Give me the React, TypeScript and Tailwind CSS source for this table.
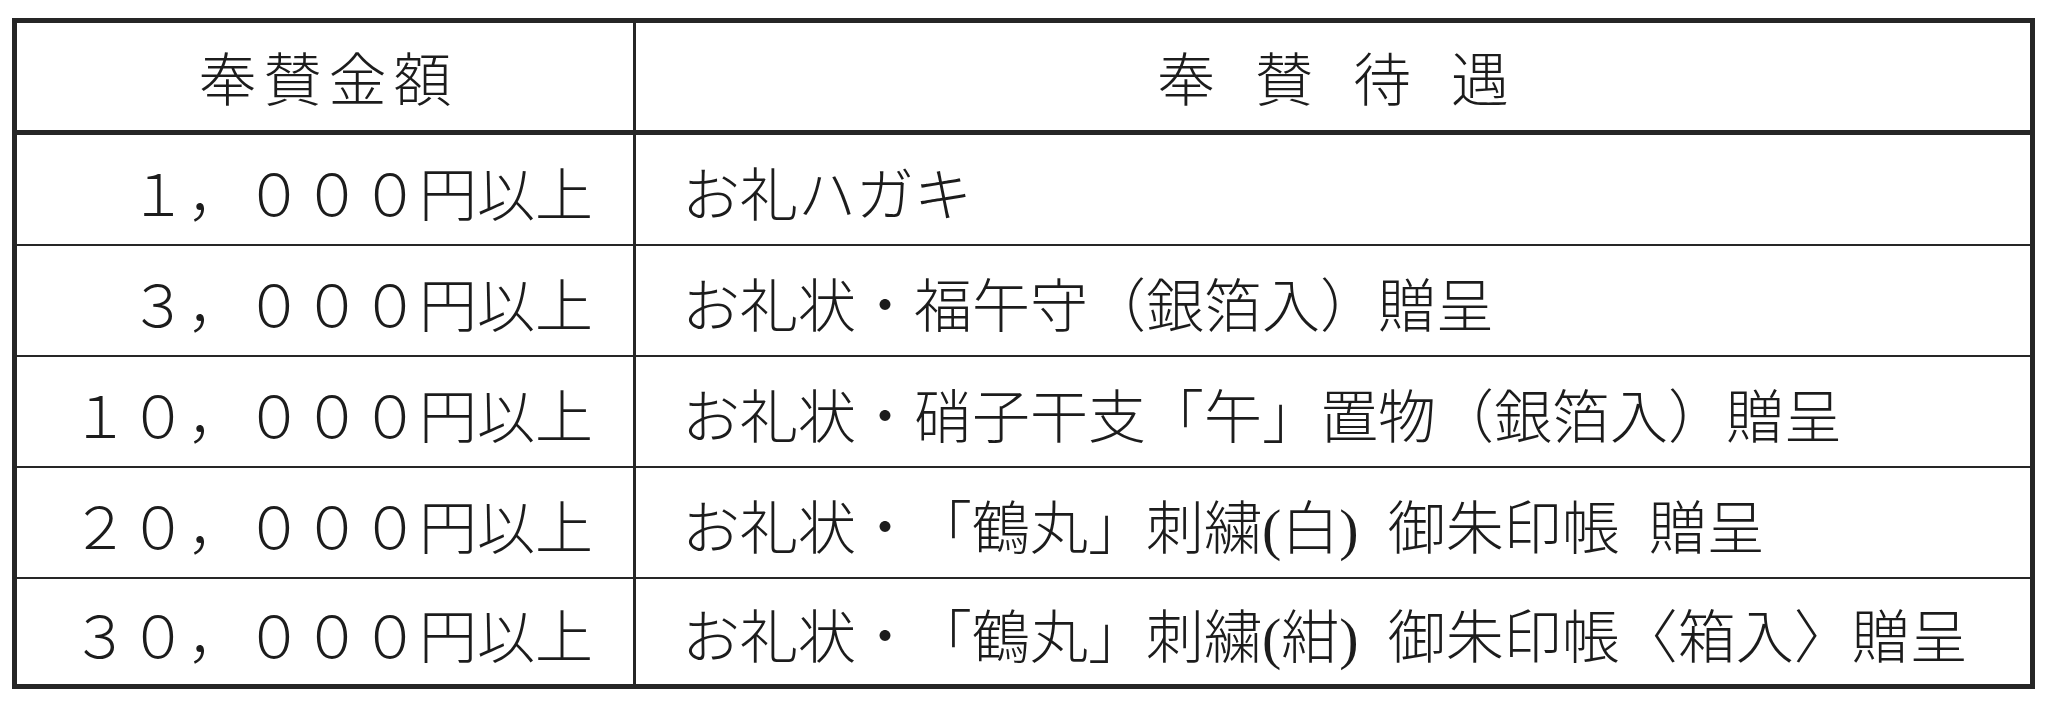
const rows = [
  { amount: '１，０００円以上', gift: 'お礼ハガキ' },
  { amount: '３，０００円以上', gift: 'お礼状・福午守（銀箔入）贈呈' },
  { amount: '１０，０００円以上', gift: 'お礼状・硝子干支「午」置物（銀箔入）贈呈' },
  { amount: '２０，０００円以上', gift: 'お礼状・「鶴丸」刺繍(白)\u2002御朱印帳\u2002贈呈' },
  { amount: '３０，０００円以上', gift: 'お礼状・「鶴丸」刺繍(紺)\u2002御朱印帳〈箱入〉贈呈' },
];

export default function App() {
  return (
    <main className="min-h-screen bg-white pt-[18px] pl-[12px]">
      <div className="w-[2023px] border-[5px] border-[#262626] text-[#1c1c1c] font-['Liberation_Serif','Noto_Sans_CJK_JP',serif] font-light text-[58px] leading-none [text-spacing-trim:space-all]">
        {/* 見出し */}
        <div className="grid grid-cols-[619px_1fr] h-[112px] border-b-[5px] border-[#262626]">
          <div className="flex items-center justify-center gap-[7px] pt-[10px] border-r-[3px] border-[#262626]">
            {'奉賛金額'.split('').map((c) => (
              <span key={c}>{c}</span>
            ))}
          </div>
          <div className="flex items-center justify-center gap-[40px] pt-[10px]">
            {'奉賛待遇'.split('').map((c) => (
              <span key={c}>{c}</span>
            ))}
          </div>
        </div>

        {/* 金額ごとの待遇 */}
        {rows.map((r, i) => (
          <div
            key={r.amount}
            className={
              i < rows.length - 1
                ? 'grid grid-cols-[619px_1fr] h-[111px] border-b-2 border-[#262626]'
                : 'grid grid-cols-[619px_1fr] h-[105px]'
            }
          >
            <div className="flex items-center justify-end pr-[40px] pt-[14px] border-r-[3px] border-[#262626]">
              {r.amount}
            </div>
            <div className="flex items-center pl-[46px] pt-[14px] whitespace-nowrap">{r.gift}</div>
          </div>
        ))}
      </div>
    </main>
  );
}
